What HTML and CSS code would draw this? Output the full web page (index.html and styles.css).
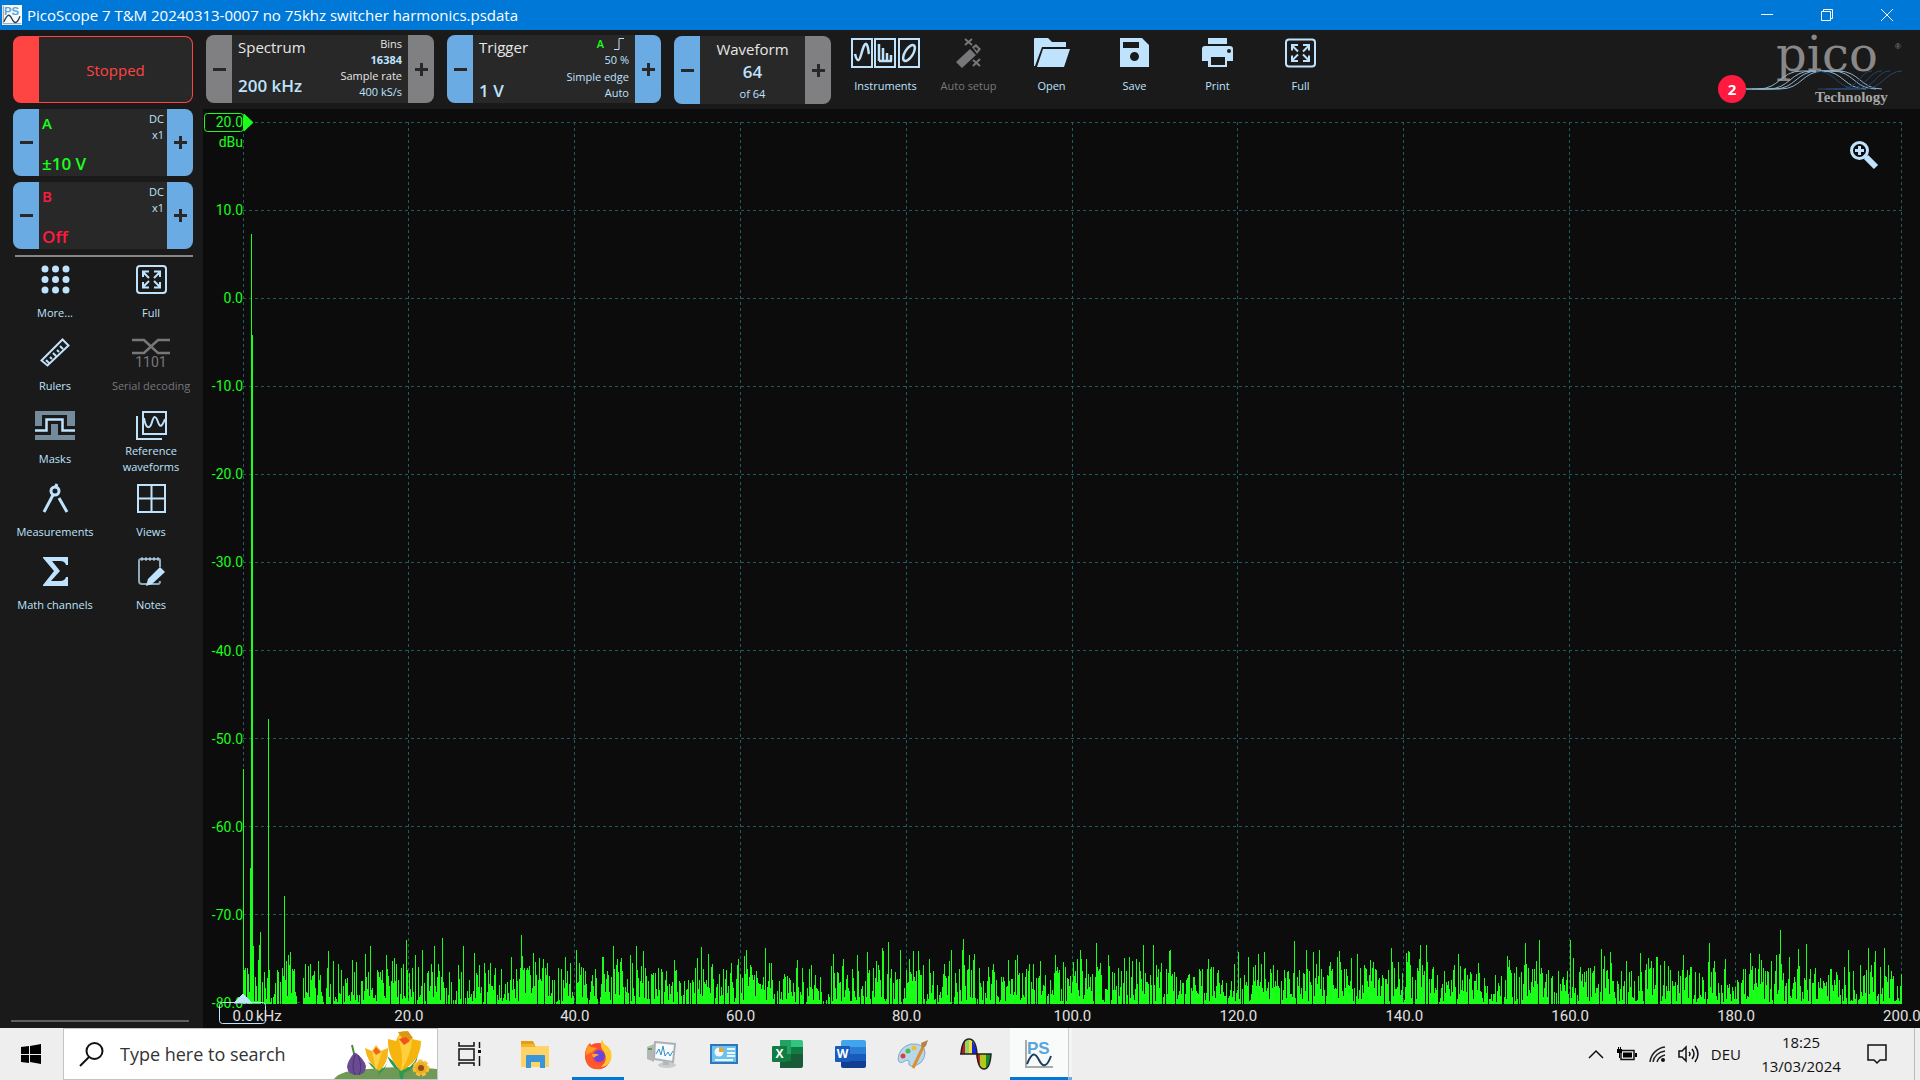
FILE: index.html
```html
<!DOCTYPE html>
<html lang="en">
<head>
<meta charset="utf-8">
<title>PicoScope 7 T&amp;M</title>
<link rel="stylesheet" href="styles.css">
</head>
<body>
<svg class="defs" aria-hidden="true">
  <symbol id="full" viewBox="0 0 31 29">
    <rect x="1" y="1" width="29" height="27" rx="3" fill="none" stroke="currentColor" stroke-width="2"/>
    <path d="M7 12V6.500h6M7 7l6 6M18 6.500h6V12M24 7l-6 6M7 17v5.500h6M7 22l6-6M18 22.500h6V17M24 22l-6-6" fill="none" stroke="currentColor" stroke-width="2"/>
  </symbol>
  <symbol id="ps" viewBox="0 0 30 30">
    <path d="M0 0h30v30H0z" fill="#f8fafa"/>
    <text x="3" y="15" font-family="Liberation Sans, sans-serif" font-weight="700" font-size="17" fill="#5aa5dc">PS</text>
    <path d="M2 1v27h27" fill="none" stroke="#a8aaac" stroke-width="2"/>
    <path d="M3 25c5-12 8-12 12-4s8 7 12-4" fill="none" stroke="#1d3e5c" stroke-width="2"/>
  </symbol>
</svg>

<header class="titlebar">
  <svg class="title-icon" viewBox="0 0 30 30"><use href="#ps"/></svg>
  <h1 class="title">PicoScope 7 T&amp;M 20240313-0007 no 75khz switcher harmonics.psdata</h1>
  <button class="win" aria-label="Minimise"><svg width="12" height="12"><path d="M0 5.500h12"/></svg></button>
  <button class="win" aria-label="Restore"><svg width="12" height="12"><path d="M.5 2.500h9v9h-9zM2.500 2.500v-2h9v9h-2"/></svg></button>
  <button class="win" aria-label="Close"><svg width="12" height="12"><path d="M0 0l12 12M12 0L0 12"/></svg></button>
</header>

<main class="app">
  <aside class="sidebar">
    <button class="stopped">Stopped</button>
    <section class="stepper channel chan-a">
      <button class="step" aria-label="Decrease range A"><i class="minus"></i></button>
      <div class="readout">
        <div class="col"><b>A</b><strong>±10 V</strong></div>
        <div class="col end"><span>DC</span><span>x1</span></div>
      </div>
      <button class="step" aria-label="Increase range A"><i class="plus"></i></button>
    </section>
    <section class="stepper channel chan-b">
      <button class="step" aria-label="Decrease range B"><i class="minus"></i></button>
      <div class="readout">
        <div class="col"><b>B</b><strong>Off</strong></div>
        <div class="col end"><span>DC</span><span>x1</span></div>
      </div>
      <button class="step" aria-label="Increase range B"><i class="plus"></i></button>
    </section>
    <hr class="rule">
    <nav class="tools">
      <button class="tool"><svg width="29" height="29" fill="currentColor"><circle cx="4" cy="4" r="3.500"/><circle cx="14.500" cy="4" r="3.500"/><circle cx="25" cy="4" r="3.500"/><circle cx="4" cy="14.500" r="3.500"/><circle cx="14.500" cy="14.500" r="3.500"/><circle cx="25" cy="14.500" r="3.500"/><circle cx="4" cy="25" r="3.500"/><circle cx="14.500" cy="25" r="3.500"/><circle cx="25" cy="25" r="3.500"/></svg><span>More...</span></button>
      <button class="tool"><svg width="31" height="29"><use href="#full"/></svg><span>Full</span></button>
      <button class="tool"><svg width="30" height="29" fill="none" stroke="currentColor" stroke-width="2"><path d="M1.500 22.500L22.500 1.500l6 6-21 20zM6 22l3 3M10 19l2 2M13 15l3 3M17 12l2 2M20 8l3 3"/></svg><span>Rulers</span></button>
      <button class="tool" disabled><svg width="38" height="29"><path d="M0 2h12l14 13h12M0 15h12L26 2h12" fill="none" stroke="currentColor" stroke-width="2.500"/><text x="19" y="29" text-anchor="middle" font-family="Roboto, sans-serif" font-size="14" fill="currentColor">1101</text></svg><span>Serial decoding</span></button>
      <button class="tool"><svg width="40" height="29"><path d="M0 0h40v29H0z" fill="#748b9b"/><path d="M0 19.500h11.500v-11h16v11H40" fill="none" stroke="#1a1a1a" stroke-width="9"/><path d="M0 19.500h11.500v-11h16v11H40" fill="none" stroke="currentColor" stroke-width="2.500"/></svg><span>Masks</span></button>
      <button class="tool two"><svg width="31" height="29" fill="none" stroke="currentColor" stroke-width="2"><path d="M7 1h23v22H7zM1 5v23h25"/><path d="M8 7c2 12 6 11 8 4s4-6 6 0 4 5 7-3"/></svg><span>Reference waveforms</span></button>
      <button class="tool"><svg width="29" height="29" fill="none" stroke="currentColor"><circle cx="14" cy="7" r="4" stroke-width="3"/><path d="M14 4l2-4M12 11L3 28M18 14l8 14" stroke-width="3"/></svg><span>Measurements</span></button>
      <button class="tool"><svg width="29" height="29" fill="none" stroke="currentColor" stroke-width="2"><path d="M1 1h27v27H1zM14.500 1v27M1 14.500h27"/></svg><span>Views</span></button>
      <button class="tool"><svg width="25" height="29" fill="currentColor"><path d="M0 0h25v8h-2q-1-4-6-4H9l8 10L8 24h9q5 0 6-4h2v9H0v-1l11-14L0 1z"/></svg><span>Math channels</span></button>
      <button class="tool"><svg width="29" height="29"><path d="M23 10V3q0-1-1-1H4Q2 2 2 4v20q0 3 3 3h16q2 0 2-3" fill="none" stroke="#8fa9b8" stroke-width="2"/><path d="M5 0v4M9 0v4M13 0v4M17 0v4M21 0v4" stroke="currentColor"/><path d="M23 10l5 5-13 12-6 2 2-7z" fill="currentColor"/></svg><span>Notes</span></button>
    </nav>
    <hr class="rule foot">
  </aside>

  <div class="stage">
    <div class="toolbar">
      <section class="stepper spectrum">
        <button class="step grey" aria-label="Decrease spectrum range"><i class="minus"></i></button>
        <div class="readout">
          <div class="col"><span class="name">Spectrum</span><strong>200 kHz</strong></div>
          <div class="col end tight"><span class="white">Bins</span><strong class="small">16384</strong><span class="white">Sample rate</span><span>400 kS/s</span></div>
        </div>
        <button class="step grey" aria-label="Increase spectrum range"><i class="plus"></i></button>
      </section>
      <section class="stepper trigger">
        <button class="step" aria-label="Decrease trigger level"><i class="minus"></i></button>
        <div class="readout">
          <div class="col low"><span class="name">Trigger</span><strong>1 V</strong></div>
          <div class="col end"><span class="source"><b>A</b><svg width="10" height="12" fill="none" stroke="currentColor"><path d="M0 11.500h5V.5h5"/></svg></span><span>50 %</span><span>Simple edge</span><span>Auto</span></div>
        </div>
        <button class="step" aria-label="Increase trigger level"><i class="plus"></i></button>
      </section>
      <section class="stepper waveform">
        <button class="step" aria-label="Previous waveform"><i class="minus"></i></button>
        <div class="readout centre"><span class="name">Waveform</span><strong>64</strong><span>of 64</span></div>
        <button class="step grey" aria-label="Next waveform"><i class="plus"></i></button>
      </section>
      <nav class="actions">
        <button class="action"><svg width="69" height="30" fill="none" stroke="currentColor" stroke-width="2"><path d="M1 1h20v28H1zM24 1h20v28H24zM48 1h20v28H48z"/><path d="M4 16c2 8 4 8 6 1s4-14 6-10 1 6 2 9M28 6v17M28 23h13M32 10v13M36 15v8M40 17v6" stroke-width="2.500"/><ellipse cx="58" cy="15" rx="4" ry="9" transform="rotate(32 58 15)" stroke-width="2.500"/></svg><span>Instruments</span></button>
        <button class="action" disabled><svg width="25" height="30" fill="currentColor"><path d="M0 24L14 11l6 6L6 30zM16 9l4-3 5 5-4 5zM18 10l3 3 1-2-2-2z" fill-rule="evenodd"/><path d="M9 1l7 6M16 1L9 7M17 22l7 6M24 21l-7 7" stroke="currentColor" stroke-width="2"/></svg><span>Auto setup</span></button>
        <button class="action"><svg width="36" height="29" fill="currentColor"><path d="M0 28V1q0-1 1-1h13l4 4h14v5H8L1 28z"/><path d="M9 11h27l-6 18H3z"/></svg><span>Open</span></button>
        <button class="action"><svg width="29" height="29" fill="currentColor"><path fill-rule="evenodd" d="M0 0h22l7 7v22H0zM3 4v6h16V4zM14.500 14a4.500 4.500 0 100 9 4.500 4.500 0 000-9z"/></svg><span>Save</span></button>
        <button class="action"><svg width="31" height="29" fill="currentColor"><path fill-rule="evenodd" d="M6 0h19v6H6zM3 8h25q3 0 3 3v12h-6v6H6v-6H0V11q0-3 3-3zM9 19v8h14v-8zM27 11a2 2 0 100 4 2 2 0 000-4z"/></svg><span>Print</span></button>
        <button class="action"><svg width="31" height="29"><use href="#full"/></svg><span>Full</span></button>
      </nav>
      <div class="brand">
        <span class="badge">2</span>
        <svg class="logo" width="170" height="74" viewBox="0 0 170 74">
          <text x="34" y="36" font-family="DejaVu Serif, serif" font-size="48" fill="#8a8787">pico</text>
          <text x="153" y="14" font-family="Liberation Sans, sans-serif" font-size="8" fill="#8a8787">®</text>
          <g fill="none">
            <g stroke="#8fb4cc"><path d="M4 54h22c22 0 22-18 44-18h20c22 0 22 18 44 18"/><path d="M10 54h22c22 0 22-18 44-18h20c22 0 22 18 44 18"/><path d="M4 54h12c22 0 22-18 44-18h20c22 0 22 18 44 18"/><path d="M16 54h22c22 0 22-18 44-18h10"/></g>
            <g stroke="#24466e"><path d="M84 54h20c22 0 22-18 36-18M92 54h20c22 0 22-18 36-18M100 54h22c18 0 22-18 38-18M76 54h20c22 0 22-18 34-18M74 36c20 0 20 18 44 18"/></g>
          </g>
          <text x="73" y="67" font-family="Liberation Serif, serif" font-weight="700" font-size="15" fill="#a7a7a7">Technology</text>
        </svg>
      </div>
    </div>

    <section class="chart">
      <div class="plot">
        <svg class="trace" viewBox="0 0 1659 882" preserveAspectRatio="none">
          <path id="grid" class="gridlines"/>
          <path id="spectrum" class="bars"/>
        </svg>
        <ol class="yaxis"><li>20.0</li><li>10.0</li><li>0.0</li><li>-10.0</li><li>-20.0</li><li>-30.0</li><li>-40.0</li><li>-50.0</li><li>-60.0</li><li>-70.0</li><li>-80.0</li></ol>
        <span class="unit">dBu</span>
        <svg class="ytag" width="50" height="19"><rect x=".5" y=".5" width="39" height="18" rx="3"/><path d="M40 1v17l9-8.500z" fill="#1aff1a"/></svg>
        <svg class="xtag" width="48" height="31"><rect x=".5" y="8.500" width="46" height="21" rx="3"/><path d="M15 9l9-9 9 9z" fill="#bfe3fd"/></svg>
        <button class="zoom" aria-label="Zoom in"><svg width="28" height="28" fill="none" stroke="#bfe3fd"><circle cx="9.500" cy="9.500" r="8" stroke-width="3"/><path d="M5 9.500h9M9.500 5v9M14 14l3 3" stroke-width="3"/><path d="M16 16l10 10" stroke-width="6"/></svg></button>
      </div>
      <ol class="xaxis"><li>0.0<span class="khz">kHz</span></li><li>20.0</li><li>40.0</li><li>60.0</li><li>80.0</li><li>100.0</li><li>120.0</li><li>140.0</li><li>160.0</li><li>180.0</li><li>200.0</li></ol>
    </section>
  </div>
</main>

<footer class="taskbar">
  <button class="start" aria-label="Start"><svg width="20" height="20"><path d="M0 3l8-1v8H0zM9 2l11-2v10H9zM0 11h8v8l-8-1zM9 11h11v9L9 18z"/></svg></button>
  <label class="search">
    <svg width="25" height="25" fill="none" stroke="#111" stroke-width="2"><circle cx="15.500" cy="9" r="8"/><path d="M10 15L1 24"/></svg>
    <input type="text" placeholder="Type here to search" aria-label="Search">
    <svg class="flowers" width="103" height="50" viewBox="0 0 103 50">
      <path d="M0 50q6-9 35-10 35-4 68 0v10z" fill="#6f9a55"/>
      <path d="M18 16q2 8 3 14" stroke="#4d8b3c" stroke-width="2" fill="none"/>
      <path d="M20 24q-7 9-7 14 1 8 10 8t9-9q-2-7-10-13z" fill="#6a4a92"/><path d="M21 26q-4 12 0 20M24 26q5 12 1 20" stroke="#4d3175" fill="none"/>
      <path d="M44 50q4-10-10-17 6 8 10 9 8-2 10-11-2 9-8 13z M66 50q0-14-13-23 6 14 14 15 12-3 17-16-2 14-14 18l-1 6z" fill="#2c9a52"/>
      <path d="M31 19l7 3 4-6 5 6 7-3q1 15-9 23-12-8-14-23z" fill="#f5b51b"/><path d="M38 22l4 20 6-20-6-5z" fill="#ffd447"/><path d="M39 22l3-4 5 5-5 3z" fill="#f0641c"/>
      <path d="M54 10l8 2Q65 3 70 2q7 2 8 8l9 2q0 20-20 30-14-14-13-32z" fill="#f6b40f"/><path d="M64 8q6 18 3 34 10-16 11-31l-8-8z" fill="#ffd03b"/><path d="M64 3l10-1 5 7-8 5z" fill="#dd9710"/><path d="M65 10l7-2 4 4-6 4z" fill="#f0541c"/>
      <circle cx="87" cy="39" r="7" fill="#efab21" stroke="#f5bf3c" stroke-width="3" stroke-dasharray="4 2"/><circle cx="87" cy="39" r="3" fill="#8d4d16"/>
    </svg>
  </label>
  <nav class="apps">
    <button class="app-btn" aria-label="Task view"><svg width="25" height="28" fill="none" stroke="#111" stroke-width="1.500"><path d="M2 2v4h15V2M2 9h15v11H2zM2 26v-3h15v3M22.500 2v6M22.500 16v10"/><path d="M22.500 10v3" stroke-width="3"/></svg></button>
    <button class="app-btn" aria-label="File Explorer"><svg width="28" height="28"><path d="M0 1h12l2 4H0z" fill="#e2a114"/><path d="M0 6h28v21H0z" fill="#fdd465"/><path d="M0 4h13l2 3H0z" fill="#f2b52d"/><path d="M5 28V16q0-1 1-1h17q1 0 1 1v12h-5v-6h-9v6z" fill="#3996d8"/></svg></button>
    <button class="app-btn open" aria-label="Firefox"><svg width="30" height="30" viewBox="0 0 30 30"><circle cx="15" cy="17" r="13" fill="#ff4b36"/><path d="M3 22a13 13 0 0024 0q-5 6-12 5T3 22z" fill="#f0208c"/><path d="M2 17Q2 8 7 4q1 3 4 4 2 0 4 2-8 5-5 12 3 4 8 4 8-1 9-10 0 11-9 14Q3 32 2 17z" fill="#ff5a2c"/><path d="M19 0q1 5 6 8 5 5 3 13-3 7-10 7 8-7 3-15-5-5-2-13z" fill="#ffc92e"/><path d="M5 6l3 2 6 1-5 4-6 3q0-6 2-10z" fill="#ff9a1e"/><circle cx="16" cy="17" r="6" fill="#6a46d8"/><path d="M9 15q5-1 7 1-4 1-5 3-2-2-2-4z" fill="#ffa436"/></svg></button>
    <button class="app-btn" aria-label="Performance monitor"><svg width="31" height="27"><path d="M1 6l7-3v18l-7-3z" fill="#b4b7b8"/><path d="M2 8h4" stroke="#4aa83a" stroke-width="2"/><path d="M9 1l20 2-2 18-19-3z" fill="#f4fafd" stroke="#aeb1b3" stroke-width="2"/><path d="M10 13l3-5 2 6 2-9 2 10 3-4 2 4 3-5" fill="none" stroke="#3a8fc4"/><ellipse cx="21" cy="24" rx="9" ry="3" fill="#c9cccd"/><path d="M17 20h6v4h-6z" fill="#b5b8ba"/></svg></button>
    <button class="app-btn" aria-label="Control Panel"><svg width="28" height="20"><path d="M1 1h26v18H1z" fill="#6fc1ee" stroke="#2d78bb" stroke-width="2"/><circle cx="9" cy="8" r="4.500" fill="#eef8ff"/><path d="M9 8V3a5 5 0 015 5z" fill="#f3a52a"/><path d="M17 5h8M17 9h8M17 12h8M5 16h18" stroke="#e9f7ff" stroke-width="2"/></svg></button>
    <button class="app-btn" aria-label="Excel"><svg width="31" height="28"><path d="M8 0h11v14H8z" fill="#21a366"/><path d="M19 0h10q2 0 2 2v12H19z" fill="#33c481"/><path d="M8 14h23v12q0 2-2 2H8z" fill="#185c37"/><path d="M19 7h12v7H19zM8 14h11v7H8z" fill="#107c41"/><rect y="6" width="15" height="16" rx="1" fill="#107c41"/><text x="7.500" y="18" text-anchor="middle" class="letter">X</text></svg></button>
    <button class="app-btn" aria-label="Word"><svg width="31" height="28"><path d="M6 7V2q0-2 2-2h21q2 0 2 2v5z" fill="#41a5ee"/><path d="M6 7h25v7H6z" fill="#2b7cd3"/><path d="M6 14h25v7H6z" fill="#185abd"/><path d="M6 21h25v5q0 2-2 2H8q-2 0-2-2z" fill="#103f91"/><rect y="6" width="15" height="16" rx="1" fill="#185abd"/><text x="7.500" y="18" text-anchor="middle" class="letter">W</text></svg></button>
    <button class="app-btn" aria-label="Paint"><svg width="32" height="30"><path d="M1 20Q2 8 14 5q14-1 14 9-1 12-13 13-4 0-3-4 0-3-4-1-6 4-7-2z" fill="#b6d7ee" stroke="#7ea9c8"/><circle cx="6" cy="17" r="2.500" fill="#d9403a"/><circle cx="11" cy="12" r="2.500" fill="#5eb648"/><circle cx="17" cy="9" r="2.500" fill="#e8c23c"/><path d="M16 29L27 6" stroke="#dd8f2b" stroke-width="3"/><path d="M24 4l7-3-2 6-4 2z" fill="#b5824b"/></svg></button>
    <button class="app-btn" aria-label="Analyser"><svg width="32" height="32"><path d="M1 16Q2 1 9 1t8 15z" fill="#8cd867"/><path d="M1 16Q2 5 5 2v14z" fill="#c2182b"/><path d="M9 1q5 0 6 15H9z" fill="#f3dd3b"/><path d="M12 3q4 4 5 13h-5z" fill="#1a26d8"/><path d="M16 16q2 15 8 15t7-15z" fill="#c9201f"/><path d="M20 16h6v14l-3 1-3-3z" fill="#b5c81c"/><path d="M26 16h5q-1 10-5 14z" fill="#158a30"/><path d="M0 16h31Q30 31 24 31t-7-15Q16 1 9 1T1 16" fill="none" stroke="#222" stroke-width="1.500"/></svg></button>
    <button class="app-btn active" aria-label="PicoScope"><svg width="30" height="30"><use href="#ps"/></svg></button>
    <span class="stack"></span>
  </nav>
  <div class="tray">
    <svg width="16" height="9" fill="none" stroke="#111" stroke-width="1.500"><path d="M1 8l7-7 7 7"/></svg>
    <svg width="21" height="14"><path d="M5 3.500h13v9H5z" fill="none" stroke="#111" stroke-width="1.500"/><path d="M7 5.500h9v5H7zM19 6h2v4h-2zM1 2h5v4H1zM2 0h1v3H2zM4 0h1v3H4zM3 6h1v5H3z"/></svg>
    <svg width="17" height="17" fill="none" stroke="#222"><path d="M1 16C2 8 8 2 16 1M4 16c1-6 6-10 12-11M8 16c1-4 4-6 8-7" stroke-width="1.500"/><circle cx="14" cy="14" r="2" fill="#111" stroke="none"/></svg>
    <svg width="21" height="18" fill="none" stroke="#111" stroke-width="1.500"><path d="M1 6h3l4-4v14l-4-4H1zM11 7q2 2 0 4M14 4q4 5 0 10M17 1q6 8 0 16"/></svg>
    <span class="lang">DEU</span>
    <time class="clock"><span>18:25</span><span>13/03/2024</span></time>
    <svg width="20" height="20" fill="none" stroke="#111" stroke-width="1.500"><path d="M1 1h18v15h-6l-3 3-3-3H1z"/></svg>
  </div>
</footer>
<script src="chart.js"></script>
</body>
</html>
```
FILE: styles.css
```css
* { box-sizing: border-box; }
body {
  margin: 0;
  min-height: 100vh;
  display: flex;
  flex-direction: column;
  background: #1a1a1a;
  color: #bfe3fd;
  font: 11px/16px "Open Sans", "Noto Sans", sans-serif;
}
button { border: 0; padding: 0; margin: 0; background: none; color: inherit; font: inherit; }
svg { display: block; flex: none; overflow: visible; }
ol { list-style: none; margin: 0; padding: 0; }
.defs { position: absolute; width: 0; height: 0; }

.titlebar { display: flex; align-items: center; height: 30px; padding: 0 3px 0 2px; background: #0078d7; color: #fff; }
.title-icon { width: 20px; height: 20px; }
.title { flex: 1; margin: 0 0 0 5px; font-size: 15px; font-weight: 400; line-height: 20px; }
.win { width: 60px; height: 30px; display: flex; align-items: center; justify-content: center; }
.win svg { fill: none; stroke: #fff; }

.app { flex: 1; display: flex; }
.sidebar { width: 203px; flex: none; display: flex; flex-direction: column; gap: 6px; padding: 6px 10px 6px 13px; }
.stopped {
  height: 67px;
  border: 1px solid #f44;
  border-left-width: 26px;
  border-radius: 8px;
  background: #282828;
  color: #f44;
  font-size: 15px;
}
.stepper { display: flex; height: 68px; border-radius: 8px; overflow: hidden; background: #282828; }
.channel { height: 67px; }
.step { width: 26px; flex: none; display: flex; align-items: center; justify-content: center; background: #6aabe4; }
.step.grey { background: #808083; }
.minus, .plus { display: block; width: 13px; height: 13px; background: linear-gradient(#282828, #282828) center / 13px 3px no-repeat; }
.plus { background: linear-gradient(#282828, #282828) center / 13px 3px no-repeat, linear-gradient(#282828, #282828) center / 3px 13px no-repeat; }
.readout { flex: 1; display: flex; justify-content: space-between; padding: 1px 6px 2px; }
.readout strong { font-size: 17px; font-weight: 600; }
.readout strong.small { font-size: 11px; font-weight: 700; }
.col { display: flex; flex-direction: column; justify-content: space-between; padding: 3px 0 7px; white-space: nowrap; }
.col.low { padding-bottom: 2px; }
.col.end { align-items: flex-end; padding: 0; }
.col.tight { padding: 0 0 1px; }
.name { color: #e6e6e6; font-size: 15px; }
.white { color: #e6e6e6; }
.source { display: flex; gap: 10px; align-items: center; padding-right: 5px; }
.source b { color: #1aff1a; font-weight: 600; }
.channel .readout { padding: 2px 3px; }
.channel .col { padding: 4px 0 2px; }
.channel .col.end { padding: 0; justify-content: flex-start; }
.channel b { font-size: 15px; font-weight: 600; }
.chan-a .col:first-child { color: #1aff1a; }
.chan-b .col:first-child { color: #ff1a40; }
.rule { width: 178px; height: 2px; margin: 0 0 0 2px; border: 0; background: #868686; }
.rule.foot { margin: auto 0 0 -2px; background: #606060; }

.tools { display: grid; grid-template-columns: 82px 110px; grid-auto-rows: 73px; margin: 0 -11px 0 1px; }
.tool, .action { display: flex; flex-direction: column; align-items: center; gap: 11px; padding-top: 2px; white-space: nowrap; }
.tool.two { gap: 3px; white-space: normal; padding-left: 20px; padding-right: 20px; }
.tool:disabled, .action:disabled { color: #77777a; }

.stage { flex: 1; display: flex; flex-direction: column; min-width: 0; }
.toolbar { display: flex; align-items: flex-start; gap: 13px; padding: 5px 14px 0 3px; }
.spectrum { width: 228px; }
.trigger { width: 214px; }
.waveform { width: 157px; margin-top: 1px; }
.centre { flex-direction: column; align-items: center; padding: 5px 0 2px; }
.actions { display: flex; }
.action { width: 83px; gap: 10px; padding-top: 3px; height: 68px; }
.action svg { height: 30px; }
.brand { margin-left: auto; display: flex; align-items: flex-end; }
.badge { width: 28px; height: 28px; margin-bottom: 6px; border-radius: 50%; background: #ff1a40; color: #fff; font-size: 15px; font-weight: 700; line-height: 28px; text-align: center; }
.logo { margin: 0 -6px 0 -4px; }

.chart { flex: 1; display: flex; flex-direction: column; padding: 13px 18px 0 40px; background: #0c0c0c; font: 15px/24px Roboto, sans-serif; }
.plot { flex: 1; position: relative; min-height: 400px; }
.trace { position: absolute; width: 100%; height: 100%; }
.gridlines { fill: none; stroke: #1f5c5e; stroke-dasharray: 3 3; shape-rendering: crispEdges; }
.bars { fill: #1aff1a; shape-rendering: crispEdges; }
.yaxis { position: absolute; top: 0; bottom: 1px; right: 100%; display: flex; flex-direction: column; justify-content: space-between; text-align: right; color: #1aff1a; font-size: 14px; }
.yaxis li { height: 0; line-height: 0; }
.unit { position: absolute; right: 100%; top: 8px; color: #1aff1a; font-size: 14px; }
.ytag { position: absolute; left: -39px; top: -9px; fill: none; stroke: #1aff1a; }
.xtag { position: absolute; left: -24px; bottom: -21px; fill: none; stroke: #bfe3fd; }
.zoom { position: absolute; right: 24px; top: 19px; }
.xaxis { display: flex; justify-content: space-between; height: 24px; color: #e0e0e0; }
.xaxis li { width: 0; display: flex; justify-content: center; white-space: nowrap; position: relative; }
.khz { position: absolute; left: 13px; }

.taskbar { display: flex; height: 52px; background: #eee; color: #111; }
.start { width: 61px; margin-right: 2px; display: flex; align-items: center; justify-content: center; }
.search { width: 375px; display: flex; align-items: center; background: #fff; border: 1px solid #c4c4c4; padding-left: 15px; }
.search input { flex: 1; min-width: 0; margin-left: 16px; padding: 0; border: 0; outline: 0; background: none; font: 18px/24px "Open Sans", sans-serif; color: #222; }
.search input::placeholder { color: #333; opacity: 1; }
.apps { display: flex; }
.app-btn { width: 52px; margin: 0 5px 0 6px; display: flex; align-items: center; justify-content: center; border: solid transparent; border-width: 3px 0; }
.app-btn:first-child { margin: 0 8px 0 5px; }
.app-btn.open { border-bottom-color: #0078d7; }
.app-btn.active { width: 58px; margin: 0 0 0 3px; background: #f9fbfb; border-bottom-color: #0078d7; }
.stack { width: 4px; border-left: 1px solid #ccc; border-bottom: 3px solid #6aabe4; background: #f4f4f4; }
.letter { font: 700 12px "Open Sans", sans-serif; fill: #fff; }
.tray { margin-left: auto; display: flex; align-items: center; gap: 12px; padding-right: 27px; margin-right: 5px; border-right: 1px solid #bbb; font-size: 15px; }
.clock { display: flex; flex-direction: column; align-items: center; gap: 8px; width: 96px; margin-right: 6px; }
```
FILE: chart.js
```js
// Grid: ten divisions on each axis.
let grid = '';
for (let i = 0; i <= 10; i++) {
  const x = Math.floor(165.8 * i) + 0.5;
  const y = 88 * i + 0.5;
  grid += `M${x} 0V881M0 ${y}H1659`;
}
document.getElementById('grid').setAttribute('d', grid);

// Peaks of the spectrum, in sections. Positions and depths are in
// thirds of a unit: position from the section's start, depth from its top.
const sections = [
  { start: -43, base: 912, peaks: '130,207 133,810 136,804 142,804 151,504 154,-1398 157,-1095 160,738 175,780 178,735 181,696 205,57 253,588 248,804 259,783 265,765 268,795 271,756 277,806 284,806 316,792 325,798 331,792 343,813 355,783 385,753 400,783 415,792 457,780 463,816 469,786 496,762 511,738 559,765 577,783 583,774 589,792 619,720 610,792 646,765 655,800 667,750 694,792 703,738 727,714 715,792 775,795 790,738 823,759 838,795 853,789 871,789 904,807 934,771 964,705 967,768 988,798 1000,759 1006,786 1018,774 1030,777 1042,789 1096,771 1111,789 1129,750 1138,789 1144,801' },
  { start: 337, base: 252, peaks: '4,141 67,111 70,111 100,78 109,135 112,117 121,126 124,113 151,105 157,129 169,78 184,138 190,93 283,120 352,114 364,81 385,102 394,141 397,132 454,129 475,117 472,135 493,108 499,90 511,135 556,84 569,129 574,129 652,120 694,135 760,102 790,117 787,138 754,138 832,105 862,96 889,123 895,135 907,84 910,93 925,66 961,90 988,117 1000,93 1015,93 1030,135 1048,117 1093,132 1108,123 1114,90 1150,57 1147,90 1153,135 1168,105 1180,120 1183,102 1240,132 1285,120 1306,120 1312,105 1348,132 1360,132 1381,123 1426,105 1432,141 1450,126' },
  { start: 827, base: 252, peaks: '10,126 22,117 31,90 34,117 49,117 79,69 82,141 91,129 115,105 118,138 163,114 178,111 187,123 199,117 208,126 220,75 250,75 259,135 274,129 298,93 301,90 415,117 424,141 493,132 505,96 535,111 556,135 565,102 574,132 583,96 610,135 673,63 709,90 730,96 739,132 748,90 778,138 781,126 802,111 808,93 811,126 844,114 862,102 883,135 901,120 910,126 964,84 967,126 985,126 1009,99 1012,126 1015,93 1018,96 1021,135 1048,117 1051,75 1057,135 1069,75 1072,126 1153,135 1165,102 1171,138 1225,129 1312,108 1318,120 1366,69 1363,135 1369,132 1399,123 1408,60' },
  { start: 1317, base: 312, peaks: '31,120 40,174 103,198 124,147 133,168 151,156 154,189 199,183 241,159 259,192 265,174 274,183 289,171 292,171 301,195 313,183 325,198 370,165 448,129 445,186 463,183 496,177 571,159 577,198 598,162 604,180 634,183 649,165 658,162 661,90 664,192 688,171 715,147 718,198 739,132 865,150 925,144 934,195 946,153 943,186 973,144 901,195 985,195' }
];

const heights = new Array(1659).fill(0);

// Noise floor from a small linear congruential generator.
let seed = 20240313;
const random = () => (seed = (seed * 1103515245 + 12345) % 2147483648) / 2147483648;
for (let x = 4; x < heights.length; x++) {
  heights[x] = random() < 0.11 ? 0 : Math.round(2 + 35 * Math.pow(random(), 1.1));
}
heights.fill(0, 54, 60);
for (const { start, base, peaks } of sections) {
  for (const pair of peaks.split(' ')) {
    const [x, y] = pair.split(',').map(Number);
    heights[start + Math.floor(x / 3)] = Math.round((base - y) / 3);
  }
}

document.getElementById('spectrum').setAttribute(
  'd', heights.map((h, x) => (h ? `M${x} 882v${-h}h1v${h}z` : '')).join(''));
```
